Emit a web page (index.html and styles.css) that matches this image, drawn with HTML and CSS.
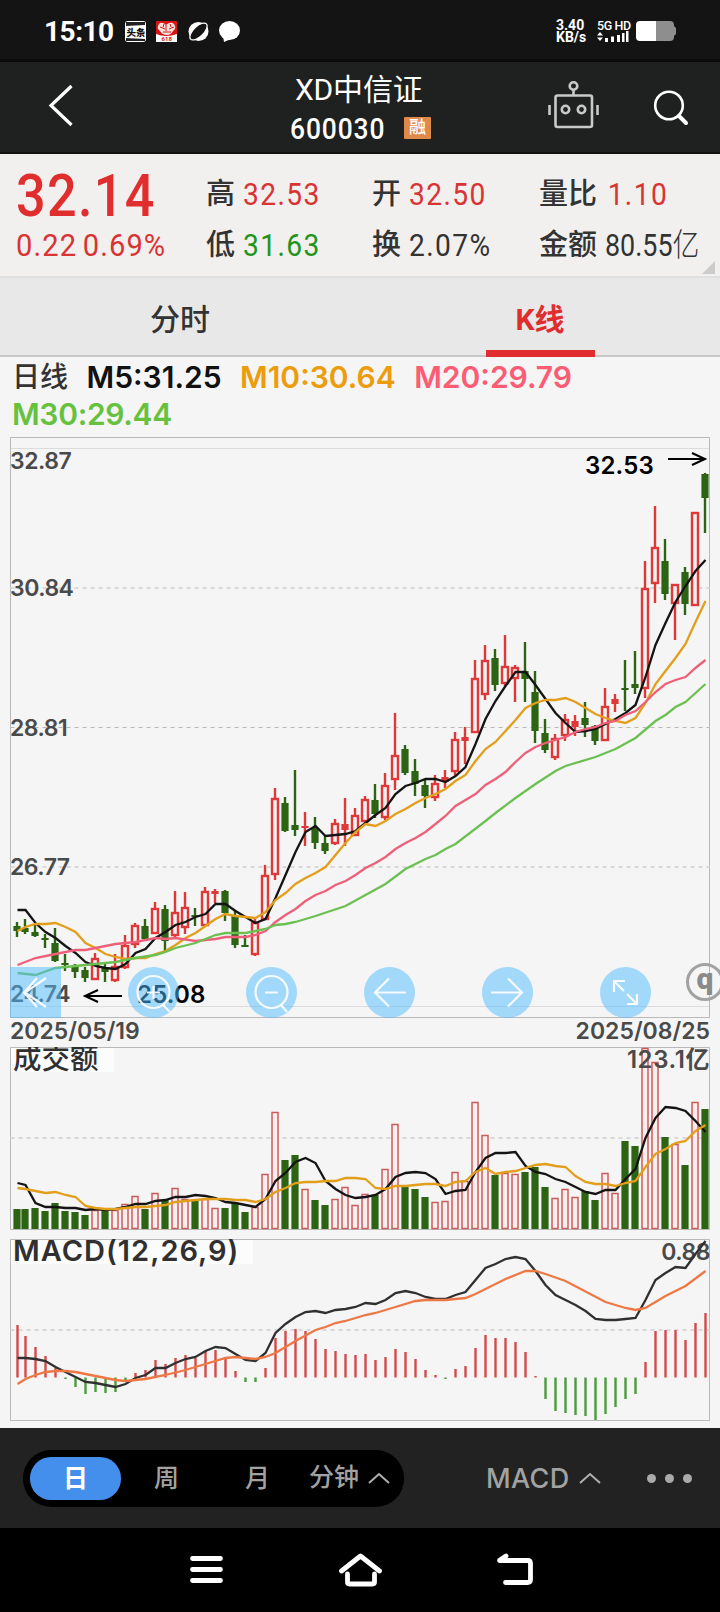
FILE: index.html
```html
<!doctype html>
<html lang="zh">
	<head>
		<meta charset="utf-8"/>
		<title>XD中信证 600030</title>
		<link rel="stylesheet" href="styles.css">
	</head>
	<body>
		<div class="status">
			<span class="time">15:10</span>
			<svg class="apps" width="118" height="24" viewBox="124 19 118 24">
				<rect x="125" y="21" width="21" height="21" rx="3" fill="#fff"/>
				<path d="M126 22h19v3l-19 1zM126 38l19 1v2h-19z" fill="#222"/>
				<text x="126.500" y="36" class="app-name">头条</text>
				<rect x="156" y="21" width="21" height="21" rx="1" fill="#d81414"/>
				<path d="M156 34q10 4 21 0v8h-21z" fill="#fff"/>
				<path d="M159 24q3-3 7 1q5-4 8-1q3 4-1 7q-2 4-6 4q-5 0-7-4q-4-3-1-7z" fill="#ffe3df"/>
				<path d="M160 27l5 2M174 27l-5 2M163 32h8M166 25v6M164 24l-1 3M170 24l1 3" stroke="#d81414" fill="none"/>
				<text x="161.500" y="41" class="app-num">618</text>
				<ellipse cx="198.500" cy="31.500" rx="10" ry="9.500" fill="#fff"/>
				<ellipse cx="198.500" cy="31.500" rx="11" ry="5" transform="rotate(-44 198.500 31.500)" fill="#141414" stroke="#fff" stroke-width="1.200"/>
				<ellipse cx="229.500" cy="30.500" rx="10.500" ry="9.500" fill="#fff"/>
				<path d="M223 36l1 6 7-3z" fill="#fff"/>
			</svg>
			<div class="speed">3.40<br>KB/s</div>
			<div class="signal">
				<span>5G HD</span>
				<svg width="32" height="12" viewBox="597 31 32 12" fill="#fff">
					<path d="M597 35.500l3-3.500 3 3.500zM597 37.500l3 3.500 3-3.500zM605 38h3v4h-3zM611 36.500h3v5.500h-3zM617 35h3v7h-3zM622 33h2.500v9h-2.500zM626 31h2.500v11h-2.500z"/>
				</svg>
			</div>
			<svg class="battery" width="40" height="20" viewBox="0 0 40 20">
				<path d="M20 0h14q4 0 4 4v1l2 2v6l-2 2v1q0 4-4 4H20z" fill="#8e8e8e"/>
				<path d="M20 0H4Q0 0 0 4v12q0 4 4 4h16z" fill="#fff"/>
			</svg>
		</div>

		<div class="header">
			<svg class="back" width="26" height="44" viewBox="48 83 26 44"><path d="M71.500 86L51 105.500 71.500 125" fill="none" stroke="#fff" stroke-width="3.200"/></svg>
			<div class="title">
				<div class="name">XD中信证</div>
				<div class="code"><span class="num">600030</span><span class="badge">融</span></div>
			</div>
			<svg class="tools" width="144" height="52" viewBox="546 78 144 52" fill="none" stroke="#c9c9c9" stroke-width="2.600">
				<rect x="555.500" y="94.500" width="36.500" height="31.500" rx="2"/>
				<circle cx="573.500" cy="85" r="3.800"/>
				<path d="M573.500 89v5M549.500 104v10M597.500 104v10"/>
				<circle cx="565.500" cy="108.500" r="3.700"/>
				<circle cx="581.500" cy="108.500" r="3.700"/>
				<circle cx="669" cy="104.500" r="13.800" stroke="#fff"/>
				<path d="M679 115l7 7" stroke="#fff" stroke-width="4" stroke-linecap="round"/>
			</svg>
		</div>

		<div class="quote">
			<div class="price">
				<div class="last">32.14</div>
				<div class="change">0.22 0.69%</div>
			</div>
			<div class="pair">
				<div><label>高</label><b class="up">32.53</b></div>
				<div><label>低</label><b class="down">31.63</b></div>
			</div>
			<div class="pair">
				<div><label>开</label><b class="up">32.50</b></div>
				<div><label>换</label><b>2.07%</b></div>
			</div>
			<div class="pair">
				<div><label>量比</label><b class="up ratio">1.10</b></div>
				<div><label>金额</label><b class="amount">80.55<i>亿</i></b></div>
			</div>
			<span class="corner"></span>
		</div>

		<div class="tabs">
			<div class="tab">分时</div>
			<div class="tab active"><span>K线</span></div>
		</div>

		<div class="charts">
			<div class="legend">
				<span class="day">日线</span>
				<span class="m5">M5:31.25</span>
				<span class="m10">M10:30.64</span>
				<span class="m20">M20:29.79</span>
				<span class="m30">M30:29.44</span>
			</div>
			<div class="main">
				<svg id="kline" width="700" height="581" viewBox="10 437 700 581">
					<path class="frame" d="M10.500 437.500h699v580h-699z"/>
					<path class="light" d="M11 448.500h698M11 1006.500h698"/>
					<path class="dash" d="M10.500 588h699M10.500 867h699"/>
					<path class="dash thin" d="M10.500 727.500h699"/>
					<g class="axis">
						<text x="10" y="469">32.87</text>
						<text x="10" y="596">30.84</text>
						<text x="10" y="736">28.81</text>
						<text x="10" y="875">26.77</text>
						<text x="10" y="1002">24.74</text>
					</g>
					<g id="candles"></g>
					<g class="mark">
						<text x="585" y="474">32.53</text>
						<path d="M668 459h36M692 453l13 6-13 6"/>
						<text x="137" y="1003">25.08</text>
						<path d="M122 996H86M98 990l-13 6 13 6"/>
					</g>
				</svg>
				<div class="controls">
					<span class="square"><svg width="50" height="50"><path d="M36 11L15 25.500 36 40M27 11L14 25.500 27 40" /></svg></span>
					<span><svg width="51" height="51"><circle cx="25.500" cy="25" r="16"/><path d="M19 25.500h13M25.500 19v13M35 38l7 7"/></svg></span>
					<span><svg width="51" height="51"><circle cx="25.500" cy="25" r="16"/><path d="M19 25.500h13M35 38l6 7"/></svg></span>
					<span><svg width="51" height="51"><path d="M42 25.500H11M25 11.500L11 25.500l14 14"/></svg></span>
					<span><svg width="51" height="51"><path d="M9 25.500h31M26 11.500l14 14-14 14"/></svg></span>
					<span><svg width="51" height="51"><path d="M14 25V14h11M14 14l10 10M37 27v10H27M37 37L27 27"/></svg></span>
				</div>
				<div class="float">q</div>
			</div>
			<div class="dates"><span>2025/05/19</span><span>2025/08/25</span></div>
			<svg id="volume" width="700" height="183" viewBox="10 1047 700 183">
				<path class="frame" d="M10.500 1047.500h699v182h-699z"/>
				<path class="dash" d="M10.500 1138h699"/>
				<rect class="label-bg" x="11" y="1048" width="103" height="24"/>
				<g id="volbars"></g>
				<text class="label" x="13" y="1069">成交额</text>
				<text class="max" x="710" y="1068">123.1亿</text>
			</svg>
			<svg id="macd" width="700" height="183" viewBox="10 1239 700 183">
				<path class="frame" d="M10.500 1239.500h699v181h-699z"/>
				<path class="dash" d="M10.500 1330h699"/>
				<rect class="label-bg" x="11" y="1240" width="242" height="24"/>
				<text class="label" x="13" y="1261">MACD(12,26,9)</text>
				<text class="max" x="710" y="1260">0.88</text>
				<g id="macdbars"></g>
			</svg>
		</div>

		<div class="toolbar">
			<div class="periods">
				<span class="on">日</span>
				<span>周</span>
				<span>月</span>
				<span class="minute">分钟<svg width="22" height="12"><path d="M1 11L11 2l10 9"/></svg></span>
			</div>
			<div class="index">MACD<svg width="22" height="12"><path d="M1 11L11 2l10 9"/></svg></div>
			<div class="more"><i></i><i></i><i></i></div>
		</div>

		<div class="nav">
			<svg width="34" height="34" viewBox="190 1554 34 34"><path d="M192.500 1559.500h28M192.500 1570.500h28M192.500 1581.500h28"/></svg>
			<svg width="44" height="36" viewBox="339 1550 44 36"><path d="M341.500 1569L360.500 1554 379.500 1569M347.500 1572v8q0 2 2 2h23q2 0 2-2v-8"/></svg>
			<svg width="36" height="36" viewBox="497 1551 36 36"><path d="M499.500 1559.500h28q3 0 3 3v16q0 3-3 3h-22M500 1559l6-4"/></svg>
		</div>

		<script>
			//每根K线: 颜色 最高 实体上 实体下 最低
			var candles = [
				['g',922,926,931,937],['g',919,928,932,934],['g',925,932,936,937],['g',934,938,940,948],['g',928,943,961,962],
				['g',954,963,965,971],['g',964,966,972,978],['g',967,970,978,982],['r',953,958,980,980],['g',963,967,972,982],
				['r',954,966,981,982],['r',935,945,968,969],['r',923,925,945,948],['g',919,926,939,941],['r',902,908,934,934],
				['g',905,909,941,951],['r',891,912,936,939],['r',892,907,928,934],['g',908,915,917,926],['r',887,891,926,926],
				['r',889,891,894,903],['g',890,891,913,921],['g',910,915,945,948],['g',935,945,947,947],['r',918,922,955,956],
				['r',865,875,920,920],['r',788,798,875,880],['g',797,803,831,832],['g',770,825,830,836],['r',812,826,828,846],
				['g',817,828,843,849],['g',836,843,851,854],['r',819,823,844,845],['r',798,824,830,846],['r',808,815,836,836],
				['r',796,799,822,823],['g',784,800,814,818],['r',773,785,818,820],['r',713,755,780,790],['g',745,749,773,775],
				['g',759,771,784,796],['g',780,785,796,808],['r',775,783,798,801],['r',770,777,782,788],['r',732,739,772,775],
				['r',727,737,741,764],['r',660,678,733,733],['r',645,660,695,700],['g',649,658,685,691],['r',635,666,684,686],
				['r',665,667,679,702],['g',642,671,679,702],['g',671,692,731,743],['g',719,733,750,753],['r',734,738,758,760],
				['r',714,719,736,741],['r',715,721,727,736],['g',702,718,725,737],['g',725,726,741,745],['r',688,706,741,741],
				['r',694,699,704,712],['g',660,688,690,711],['g',651,684,688,694],['r',561,588,689,698],['r',506,547,584,603],
				['g',539,561,594,600],['r',584,584,604,640],['g',567,572,604,615],['r',512,512,606,606],['g',473,474,498,533]
			];
			var m5 = [910,910,923,932,938,946,953,962,966,968,969,964,953,949,938,932,925,922,917,914,904,904,911,917,923,919,898,875,852,832,826,836,835,834,831,823,815,808,794,786,783,779,779,782,776,767,744,719,701,686,672,672,685,699,713,723,732,731,729,724,719,713,705,677,645,623,602,586,571,560];
			var m10 = [931,927,924,924,923,927,932,943,948,954,957,959,958,958,954,951,945,938,933,926,919,914,916,917,918,912,900,893,884,878,873,867,855,843,832,824,826,821,814,809,803,798,794,789,781,775,761,749,742,731,720,708,703,700,700,698,702,708,714,718,721,723,718,703,684,671,658,644,622,601];
			//折线只记拐点: x,y
			var m20 = '17,965 35,958 55,954 75,950 85,950 115,944 135,942 155,938 165,939 175,938 195,941 215,939 225,937 245,937 255,935 265,931 275,922 285,915 295,909 305,901 315,895 325,891 335,885 345,881 355,875 365,868 375,863 385,857 395,849 405,843 415,838 425,832 435,824 445,816 455,806 465,800 475,794 485,785 495,779 505,772 515,762 525,753 535,747 545,743 565,737 575,732 585,729 595,727 605,723 615,721 625,715 635,711 645,702 655,692 665,684 675,680 685,677 695,668 705,660';
			var m30 = '17,973 35,975 55,968 75,966 95,964 115,962 135,958 155,955 165,952 175,948 195,943 215,935 225,933 245,933 255,931 265,929 275,925 285,924 295,922 315,916 345,906 365,895 385,884 405,869 425,859 435,855 445,849 455,844 485,821 495,813 515,798 535,784 555,771 565,766 595,757 615,749 635,738 655,721 665,715 675,707 685,702 695,693 705,684';
			var vol = [1209,1209,1208,1211,1203,1211,1212,1215,1210,1211,1210,1204,1196,1209,1193,1200,1188,1199,1201,1199,1208,1208,1203,1212,1207,1174,1112,1160,1155,1189,1200,1205,1199,1187,1205,1194,1195,1169,1124,1187,1189,1197,1202,1201,1172,1181,1102,1135,1175,1173,1174,1172,1167,1187,1198,1189,1197,1191,1200,1173,1193,1141,1146,1048,1062,1137,1144,1165,1102,1109];
			var v5 = [1183,1185,1203,1207,1207,1208,1208,1210,1209,1210,1209,1207,1204,1204,1201,1200,1197,1197,1195,1196,1198,1202,1203,1205,1207,1199,1181,1173,1162,1158,1163,1181,1189,1195,1198,1197,1195,1189,1177,1173,1172,1173,1179,1194,1191,1190,1172,1158,1153,1153,1152,1166,1172,1174,1179,1182,1187,1192,1194,1190,1190,1179,1169,1138,1118,1107,1108,1111,1121,1132];
			var v10 = [1188,1189,1191,1193,1192,1195,1197,1206,1208,1209,1209,1208,1207,1207,1206,1205,1202,1201,1200,1199,1199,1199,1200,1200,1202,1199,1192,1188,1183,1182,1182,1181,1181,1178,1178,1179,1188,1189,1186,1186,1185,1184,1184,1186,1182,1181,1172,1168,1174,1172,1171,1168,1165,1164,1166,1167,1176,1182,1184,1184,1186,1183,1181,1167,1154,1149,1143,1141,1131,1125];
			var bars = [1325,1336,1347,1356,1368,1379,1387,1394,1392,1393,1392,1382,1373,1370,1360,1364,1358,1355,1358,1351,1350,1357,1371,1382,1382,1368,1338,1331,1329,1331,1339,1349,1351,1354,1355,1354,1360,1357,1349,1352,1359,1370,1375,1379,1369,1366,1348,1335,1338,1338,1342,1352,1376,1399,1411,1413,1415,1416,1420,1414,1407,1399,1394,1362,1331,1330,1330,1340,1323,1313];
			var dif = [1358,1358,1359,1361,1367,1372,1377,1382,1383,1385,1387,1384,1378,1375,1368,1368,1363,1359,1357,1351,1347,1348,1354,1360,1361,1353,1333,1324,1317,1312,1311,1313,1310,1309,1307,1303,1304,1300,1293,1291,1293,1297,1299,1299,1295,1292,1280,1268,1264,1259,1257,1259,1271,1285,1295,1300,1305,1311,1319,1320,1320,1319,1318,1300,1280,1273,1267,1268,1254,1241];
			var dea = '17,1384 25,1379 35,1375 45,1372 55,1371 65,1371 75,1372 95,1376 115,1380 125,1381 135,1380 145,1379 165,1375 185,1370 205,1364 225,1358 235,1357 255,1359 265,1357 275,1353 295,1341 315,1330 325,1327 335,1323 345,1321 355,1318 365,1315 375,1313 395,1307 415,1301 425,1300 445,1300 455,1299 465,1298 475,1294 505,1279 525,1271 535,1271 545,1274 565,1281 605,1302 625,1308 635,1310 645,1308 665,1296 685,1286 705,1271';

			//第一根靠左边框 其余间隔10
			function px(i){
				return i==0 ? 17 : 15+i*10;
			}
			function rect(cls,x,y,w,h){
				return '<rect class="'+cls+'" x="'+x+'" y="'+y+'" width="'+w+'" height="'+h+'"/>';
			}
			function line(cls,values){
				var pts = values;
				if(typeof values!='string'){
					pts = values.map(function(v,i){ return px(i)+','+v; }).join(' ');
				}
				return '<polyline class="line '+cls+'" transform="translate(.5 0)" points="'+pts+'"/>';
			}

			var html = '';
			for(var i=0;i<candles.length;i++){
				var c = candles[i], x = px(i);
				html += rect(c[0],x-1.2,c[1],2.4,c[4]-c[1]);
				if(c[0]=='g' || c[3]-c[2]<7){
					html += rect(c[0],x-3.6,c[2],7.2,c[3]-c[2]);
				}else{
					html += rect('hollow',x-3,c[2]+1,6,c[3]-c[2]-2);
				}
			}
			html += line('l-black',m5)+line('l-orange',m10)+line('l-pink',m20)+line('l-green',m30);
			document.getElementById('candles').innerHTML = html;

			html = '';
			for(var i=0;i<vol.length;i++){
				var x = px(i);
				if(candles[i][0]=='g'){
					html += rect('g',x-3.6,vol[i],7.2,1229-vol[i]);
				}else{
					html += rect('vhollow',x-3,vol[i]+.5,6,1228-vol[i]);
				}
			}
			html += line('l-black',v5)+line('l-orange',v10);
			document.getElementById('volbars').innerHTML = html;

			html = '';
			for(var i=0;i<bars.length;i++){
				var y = bars[i];
				html += y<1377 ? rect('mr',px(i)-.7,y,2.4,1377.5-y) : rect('mg',px(i)-.7,1377.5,2.4,y-1377.5);
			}
			html += line('l-dif',dif)+line('l-dea',dea);
			document.getElementById('macdbars').innerHTML = html;
		</script>
	</body>
</html>
```
FILE: styles.css
```css
*{margin:0;padding:0;box-sizing:border-box;}
body{
	width:720px;
	height:1612px;
	overflow:hidden;
	background:#f5f5f5;
	font-family:Roboto,"Noto Sans CJK SC",sans-serif;
	color:#333;
}
svg{
	display:block;
}
i,b{
	font-style:normal;
	font-weight:normal;
}
.status{
	height:62px;
	background:#141414;
	border-bottom:3px solid #0b0b0b;
	display:flex;
	align-items:center;
	padding:3px 44px 0 44px;
	color:#fff;
}
.time{
	width:80px;
	font-size:28px;
	font-weight:700;
	letter-spacing:-.5px;
}
.apps{
	margin-right:auto;
}
.app-name{
	font:900 9.5px "Noto Sans CJK SC",sans-serif;
	fill:#111;
}
.app-num{
	font:700 6px Roboto,sans-serif;
	fill:#d81414;
}
.speed{
	width:41px;
	font-size:14px;
	line-height:12px;
	font-weight:700;
}
.signal{
	width:39px;
	font-size:12.5px;
	line-height:11px;
	font-weight:500;
	letter-spacing:-.4px;
	white-space:nowrap;
}
.header{
	height:92px;
	background:#1f2120;
	border-bottom:2px solid #121212;
	display:flex;
	align-items:center;
	color:#fff;
	padding:0 30px 0 48px;
}
.back{
	margin-top:-4px;
}
.title{
	width:150px;
	margin:2px auto 0 216px;
}
.name{
	font-size:30px;
	line-height:40px;
	font-weight:400;
	letter-spacing:-.2px;
	padding-left:5px;
	white-space:nowrap;
}
.code{
	font-size:30px;
	line-height:37px;
	font-weight:500;
	display:flex;
	align-items:center;
}
.num{
	width:92px;
	letter-spacing:1px;
	transform:scaleX(.88);
	transform-origin:left;
}
.badge{
	width:27px;
	height:22px;
	margin-left:22px;
	background:#e08a4a;
	border-radius:1px;
	font-size:17px;
	line-height:21px;
	text-align:center;
}
.tools{
	margin-top:-4px;
}
.quote{
	height:124px;
	background:#f2f0ee;
	border-bottom:2px solid #e0e0e0;
	display:grid;
	grid-template-columns:190px 166px 167px 182px;
	padding:14px 0 0 16px;
	position:relative;
}
.last{
	font-size:60px;
	line-height:56px;
	height:51px;
	font-weight:500;
	letter-spacing:1.5px;
	transform:scaleX(.87);
	transform-origin:left;
	color:#e02d2d;
}
.change{
	font-size:32px;
	line-height:52px;
	letter-spacing:1.2px;
	word-spacing:-3px;
	transform:scaleX(.91);
	transform-origin:left;
	color:#d93434;
	white-space:nowrap;
}
.pair div{
	height:51px;
	line-height:50px;
	font-size:32px;
	white-space:nowrap;
	display:flex;
	position:relative;
	top:1px;
}
.pair label{
	font-size:29px;
	font-weight:500;
	margin-right:8px;
}
.pair b{
	letter-spacing:1.6px;
	transform:scaleX(.88);
	transform-origin:left;
}
.up{
	color:#d93434;
}
.down{
	color:#21941a;
}
.pair .ratio{
	padding-left:3px;
}
.pair .amount{
	letter-spacing:0;
	transform:scaleX(.84);
}
.amount i{
	font-size:32px;
	font-weight:300;
}
.corner{
	position:absolute;
	right:5px;
	bottom:2px;
	border-left:13px solid transparent;
	border-bottom:13px solid #ccc;
}
.tabs{
	height:79px;
	background:#e8e8e8;
	border-bottom:2px solid #c8c8c8;
	display:grid;
	grid-template-columns:1fr 1fr;
}
.tab{
	height:79px;
	line-height:84px;
	text-align:center;
	font-size:30px;
	font-weight:500;
}
.tab.active{
	color:#e02d2d;
	font-weight:700;
}
.tab.active span{
	display:block;
	width:109px;
	height:79px;
	margin:0 auto;
	border-bottom:7px solid #e02d2d;
}
.legend{
	height:80px;
	padding:2px 12px 0;
	display:flex;
	flex-wrap:wrap;
	font:600 30px/37px Inter,"Noto Sans CJK SC",sans-serif;
	align-content:flex-start;
}
.legend span{
	margin-right:18.5px;
}
.legend .day{
	font-size:28px;
	font-weight:500;
}
.m5{color:#111;}
.m10{color:#ec9c0c;}
.m20{color:#fc5c74;}
.m30{color:#66c23e;letter-spacing:-.3px;}
.main{
	position:relative;
	margin-left:10px;
	width:710px;
}
.frame{
	fill:none;
	stroke:#b9b9b9;
}
.light{
	stroke:#dcdcdc;
}
.dash{
	stroke:#d9d9d9;
	stroke-width:2;
	stroke-dasharray:4 4;
}
.dash.thin{
	stroke:#b9b9b9;
	stroke-width:1;
}
.axis,.max{
	font:600 23px Inter,"Noto Sans CJK SC",sans-serif;
	letter-spacing:-.5px;
	fill:#4a4a4a;
}
.max{
	text-anchor:end;
}
#volume .max{
	font-size:24px;
	letter-spacing:.6px;
}
.mark text{
	font:600 24px Inter,sans-serif;
	letter-spacing:.2px;
	fill:#000;
}
.mark path{
	fill:none;
	stroke:#000;
	stroke-width:2;
}
.g{fill:#2d6414;}
.r{fill:#de3838;}
.hollow{
	fill:#fbeeee;
	stroke:#de3838;
	stroke-width:2.4;
}
.vhollow{
	fill:#fdeeee;
	stroke:#cb5c5c;
	stroke-width:1.5;
}
.mr{fill:#d34a4a;}
.mg{fill:#4a9c3c;}
.line{
	fill:none;
	stroke-width:2.3;
}
.l-black{stroke:#141414;}
.l-orange{stroke:#e39e1c;}
.l-pink{stroke:#ee6079;}
.l-green{stroke:#6cc052;}
.l-dif{stroke:#303030;}
.l-dea{stroke:#ee7845;}
.controls{
	position:absolute;
	left:0;
	top:530px;
	display:flex;
	gap:67px;
}
.controls span{
	width:51px;
	height:51px;
	border-radius:50%;
	background:rgba(80,188,255,.5);
}
.controls .square{
	border-radius:0;
}
.controls svg{
	fill:none;
	stroke:rgba(255,255,255,.9);
	stroke-width:2.2;
}
.float{
	position:absolute;
	left:676px;
	top:526px;
	width:38px;
	height:38px;
	border:3px solid #a2a2a2;
	border-radius:50%;
	font:900 30px/25px Roboto,sans-serif;
	text-align:center;
	color:#8a8a8a;
}
.dates{
	height:29px;
	padding:0 10px;
	display:flex;
	justify-content:space-between;
	font:600 23px/27px Inter,sans-serif;
	color:#4a4a4a;
}
#volume{
	margin-left:10px;
}
#macd{
	margin:9px 0 0 10px;
}
.label-bg{
	fill:#fcfcfc;
}
.label{
	font:600 29px Inter,"Noto Sans CJK SC",sans-serif;
	letter-spacing:1px;
	fill:#303030;
}
#volume .label{
	font-size:28.5px;
	font-weight:500;
	letter-spacing:0;
}
.toolbar{
	height:100px;
	margin-top:6px;
	background:#222;
	display:flex;
	align-items:center;
	padding:0 28px 0 23px;
	color:#a2a2a2;
	font-size:25px;
	font-weight:500;
}
.periods{
	width:381px;
	height:57px;
	border-radius:28px;
	background:#000;
	display:flex;
	align-items:center;
	padding-left:7px;
}
.periods span{
	width:91px;
	height:43px;
	line-height:44px;
	text-align:center;
	border-radius:21px;
}
.periods .on{
	background:#458fec;
	color:#fff;
	font-weight:700;
}
.periods .minute{
	width:94px;
	display:flex;
	align-items:center;
	margin-left:6px;
	white-space:nowrap;
	flex:none;
}
.minute svg,.index svg{
	flex:none;
	margin-left:9px;
	fill:none;
	stroke:#b0b0b0;
	stroke-width:2;
}
.index{
	margin-left:82px;
	display:flex;
	align-items:center;
	font-family:Inter,sans-serif;
	font-size:27px;
	letter-spacing:.4px;
}
.more{
	margin-left:auto;
	display:flex;
	gap:9px;
}
.more i{
	width:9px;
	height:9px;
	border-radius:50%;
	background:#aaa;
}
.nav{
	height:84px;
	background:#000;
	display:flex;
	align-items:center;
	padding:0 187px 0 190px;
	justify-content:space-between;
	fill:none;
	stroke:#fff;
	stroke-width:4.8;
	stroke-linecap:round;
	stroke-linejoin:round;
}
```
